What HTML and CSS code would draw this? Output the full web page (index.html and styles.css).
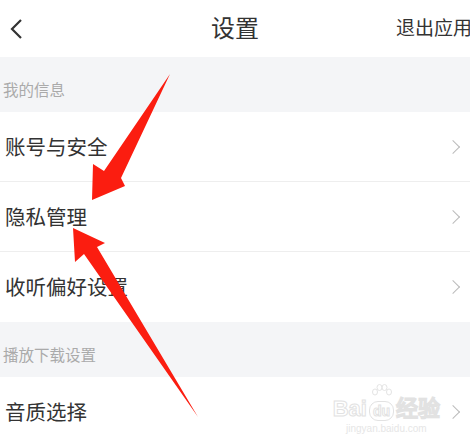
FILE: index.html
```html
<!DOCTYPE html>
<html lang="zh-CN">
<head>
  <meta charset="UTF-8">
  <meta name="viewport" content="width=device-width, initial-scale=1.0">
  <title>设置</title>
  <link rel="stylesheet" href="styles.css">
</head>
<body>

<div class="page">
  <div class="topbar">
    <span class="back">
      <svg width="14" height="22" viewBox="0 0 14 22"><path d="M12 2 L3 11 L12 20" fill="none" stroke="#333" stroke-width="2.2"/></svg>
    </span>
    <h1>设置</h1>
    <span class="quit">退出应用</span>
  </div>

  <div class="section">我的信息</div>
  <div class="row"><span>账号与安全</span><i class="arrow"></i></div>
  <div class="row"><span>隐私管理</span><i class="arrow"></i></div>
  <div class="row last"><span>收听偏好设置</span><i class="arrow"></i></div>

  <div class="section">播放下载设置</div>
  <div class="row last">
    <span>音质选择</span>
    <div class="mark">
      <svg class="paw" width="22" height="16" viewBox="0 0 22 16">
        <g fill="none" stroke="#e4e4e4" stroke-width="1">
          <ellipse cx="4" cy="8" rx="2.5" ry="3"/>
          <ellipse cx="8.5" cy="3.5" rx="2.5" ry="3"/>
          <ellipse cx="13.5" cy="3.5" rx="2.5" ry="3"/>
          <ellipse cx="18" cy="8" rx="2.5" ry="3"/>
        </g>
      </svg>
      <b>Bai<em>du</em>经验</b>
      <small>jingyan.baidu.com</small>
    </div>
    <i class="arrow"></i>
  </div>

  <svg class="pointers" width="470" height="448" viewBox="0 0 470 448">
    <polygon points="170,74 121,178 125,186 92,200 93,164 104,171" fill="#fb1d10"/>
    <polygon points="198,417 97,247 105,243 73,228 75,262 84,254" fill="#fb1d10"/>
  </svg>
</div>

</body>
</html>
```

FILE: styles.css
```css
* {
  box-sizing: border-box;
}

body {
  margin: 0;
  font-family: "Noto Sans CJK SC", "Noto Sans", sans-serif;
  color: #333;
  background: #fff;
  overflow: hidden;
}

.page {
  position: relative;
  width: 470px;
  height: 448px;
  overflow: hidden;
}

.topbar {
  height: 57px;
  display: grid;
  grid-template-columns: minmax(0, 1fr) auto minmax(0, 1fr);
  align-items: center;
}

.back {
  display: flex;
  margin-left: 9px;
}

.topbar h1 {
  margin: 0 0 4px 0;
  font-size: 24px;
  font-weight: normal;
  color: #333;
}

.quit {
  justify-self: end;
  font-size: 19px;
  white-space: nowrap;
  margin-right: -2px;
  margin-bottom: 4px;
}

.section {
  height: 55px;
  background: #f4f5f7;
  color: #aaa;
  font-size: 15.5px;
  padding: 21px 0 0 3px;
}

.row {
  height: 70px;
  display: flex;
  align-items: center;
  padding: 0 4px 0 5px;
  border-bottom: 1px solid #eeeeee;
  font-size: 20.5px;
}

.row.last {
  border-bottom: none;
}

.row span {
  flex: 1;
  padding-bottom: 2px;
}

.arrow {
  width: 10px;
  height: 10px;
  border-top: 1.5px solid #bbb;
  border-right: 1.5px solid #bbb;
  transform: rotate(45deg);
  margin-right: 8px;
}

.mark {
  position: relative;
  display: flex;
  flex-direction: column;
  align-items: center;
  margin-right: 8px;
  margin-top: 8px;
  line-height: 1;
}

.paw {
  position: absolute;
  left: 38px;
  top: -14px;
}

.mark b {
  font-family: "Liberation Sans", sans-serif;
  font-size: 22px;
  font-weight: bold;
  color: #fff;
  -webkit-text-stroke: 1px #e2e2e2;
}

.mark em {
  font-style: normal;
  font-size: 14px;
  border: 1px solid #e2e2e2;
  border-radius: 9px;
  padding: 1px 3px;
  margin: 0 2px;
}

.mark small {
  font-family: "Liberation Sans", sans-serif;
  font-size: 10px;
  color: #e6e6e6;
  margin-top: 4px;
}

.pointers {
  position: absolute;
  left: 0;
  top: 0;
  pointer-events: none;
}
```
